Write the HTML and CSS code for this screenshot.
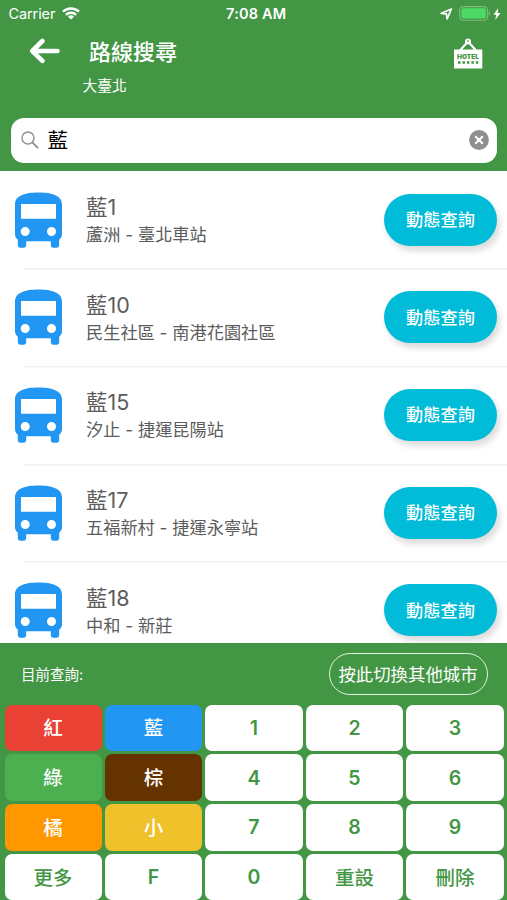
FILE: index.html
```html
<!DOCTYPE html>
<html lang="zh-Hant">
<head>
    <meta charset="UTF-8">
    <meta name="viewport" content="width=device-width, initial-scale=1.0">
    <title>路線搜尋</title>
    <link rel="stylesheet" href="styles.css">
</head>
<body>
    <svg class="defs" width="0" height="0">
        <symbol id="bus" viewBox="0 0 47 56">
            <path fill="#2196f3" fill-rule="evenodd" d="M0 12.500C0 3.500 10 0.500 23.500 0.500S47 3.500 47 12.500V42c0 2.300-1 4.300-2.800 5.800V53c0 1.600-1 2.700-2.500 2.700h-3.400c-1.500 0-2.500-1.100-2.500-2.700v-3.700H11.200V53c0 1.600-1 2.700-2.500 2.700H5.300C3.800 55.700 2.800 54.600 2.800 53v-5.200C1 46.300 0 44.300 0 42zM6 12v14.700h35V12zM10.200 35a4.500 4.500 0 1 0 0 9 4.500 4.500 0 1 0 0-9zM36.500 35a4.500 4.500 0 1 0 0 9 4.500 4.500 0 1 0 0-9z"/>
        </symbol>
    </svg>

    <header class="header">
        <div class="status">
            <div class="status-left">
                <span class="carrier">Carrier</span>
                <svg width="18" height="13" viewBox="0 0 18 13" fill="none" stroke="#fff" stroke-width="2.400">
                    <path d="M1 4.700a11.500 11.500 0 0 1 16 0M3.900 7.800a7.300 7.300 0 0 1 10.200 0"/>
                    <path d="M9 12.600L6 9.700a4.300 4.300 0 0 1 6 0z" fill="#fff" stroke="none"/>
                </svg>
            </div>
            <span class="time">7:08 AM</span>
            <div class="status-right">
                <svg width="13" height="12" viewBox="0 0 13 12" fill="none" stroke="#fff" stroke-width="1.700" stroke-linejoin="round">
                    <path d="M11.400 1L1.200 5.300l5.200 0.600 0.700 5z"/>
                </svg>
                <svg width="32" height="15" viewBox="0 0 32 15">
                    <rect x="0.600" y="0.600" width="28" height="13.600" rx="3.800" fill="none" stroke="#84bd7e" stroke-width="1.100"/>
                    <rect x="2.300" y="2.300" width="24.600" height="10.200" rx="1.800" fill="#4cd964"/>
                    <path d="M29.900 5.200c1.700 0.700 1.700 3.700 0 4.400z" fill="#84bd7e"/>
                </svg>
                <svg width="8" height="12" viewBox="0 0 8 12">
                    <path d="M5.300 0L0.500 6.700h2.800L2.200 12 7.500 5H4.500z" fill="#fff"/>
                </svg>
            </div>
        </div>

        <div class="navbar">
            <svg class="back" width="31" height="26" viewBox="0 0 31 26" fill="none" stroke="#fff" stroke-width="4.600" stroke-linecap="round" stroke-linejoin="round">
                <path d="M13.400 3L3.300 13l10.100 9.800M4 13h24.500"/>
            </svg>
            <h1>路線搜尋</h1>
            <svg class="hotel" width="30" height="31" viewBox="0 0 30 31">
                <path d="M7 12.500l7-8h2l7 8" fill="none" stroke="#fff" stroke-width="2.200"/>
                <circle cx="15" cy="3.500" r="2.100" fill="none" stroke="#fff" stroke-width="1.900"/>
                <rect x="1" y="11.500" width="28.300" height="19" fill="#fff"/>
                <text x="15" y="20.600" class="hotel-text" text-anchor="middle" textLength="22" lengthAdjust="spacingAndGlyphs">HOTEL</text>
                <path d="M5 24.600h21" stroke="#439744" stroke-width="2.500" stroke-dasharray="2.500 1.950"/>
            </svg>
        </div>
        <div class="city">大臺北</div>

        <div class="search">
            <svg width="18" height="18" viewBox="0 0 18 18" fill="none" stroke="#8e8e93" stroke-width="1.400">
                <circle cx="7" cy="7" r="6"/>
                <path d="M11.300 11.300l5.800 5.800" stroke-width="1.900"/>
            </svg>
            <span class="keyword">藍</span>
            <svg width="20" height="20" viewBox="0 0 20 20">
                <circle cx="10" cy="10" r="9.900" fill="#8e8e93"/>
                <path d="M6.200 6.200l7.600 7.600M13.800 6.200l-7.600 7.600" stroke="#fff" stroke-width="2.100"/>
            </svg>
        </div>
    </header>

    <main class="routes">
        <div class="route">
            <svg class="bus"><use href="#bus"/></svg>
            <div class="info">
                <div class="name">藍1</div>
                <div class="stops">蘆洲 - 臺北車站</div>
            </div>
            <button class="query">動態查詢</button>
        </div>
        <div class="route">
            <svg class="bus"><use href="#bus"/></svg>
            <div class="info">
                <div class="name">藍10</div>
                <div class="stops">民生社區 - 南港花園社區</div>
            </div>
            <button class="query">動態查詢</button>
        </div>
        <div class="route">
            <svg class="bus"><use href="#bus"/></svg>
            <div class="info">
                <div class="name">藍15</div>
                <div class="stops">汐止 - 捷運昆陽站</div>
            </div>
            <button class="query">動態查詢</button>
        </div>
        <div class="route">
            <svg class="bus"><use href="#bus"/></svg>
            <div class="info">
                <div class="name">藍17</div>
                <div class="stops">五福新村 - 捷運永寧站</div>
            </div>
            <button class="query">動態查詢</button>
        </div>
        <div class="route">
            <svg class="bus"><use href="#bus"/></svg>
            <div class="info">
                <div class="name">藍18</div>
                <div class="stops">中和 - 新莊</div>
            </div>
            <button class="query">動態查詢</button>
        </div>
    </main>

    <footer class="panel">
        <div class="current">
            <span>目前查詢:</span>
            <button class="switch">按此切換其他城市</button>
        </div>
        <div class="keypad">
            <button class="key word red">紅</button>
            <button class="key word blue">藍</button>
            <button class="key">1</button>
            <button class="key">2</button>
            <button class="key">3</button>
            <button class="key word green">綠</button>
            <button class="key word brown">棕</button>
            <button class="key">4</button>
            <button class="key">5</button>
            <button class="key">6</button>
            <button class="key word orange">橘</button>
            <button class="key word yellow">小</button>
            <button class="key">7</button>
            <button class="key">8</button>
            <button class="key">9</button>
            <button class="key word">更多</button>
            <button class="key">F</button>
            <button class="key">0</button>
            <button class="key word">重設</button>
            <button class="key word">刪除</button>
        </div>
    </footer>
</body>
</html>
```
FILE: styles.css
```css
*{
    box-sizing: border-box;
}

body{
    margin: 0;
    height: 900px;
    display: flex;
    flex-direction: column;
    overflow: hidden;
    font-family: Inter, "Noto Sans CJK TC", sans-serif;
    background-color: #fff;
}

svg{
    display: block;
    flex: none;
}

.defs{
    position: absolute;
}

button{
    border: none;
    padding: 0;
    font-family: inherit;
    white-space: nowrap;
}

.header{
    height: 170.7px;
    flex: none;
    background-color: #439744;
    color: white;
}

.status{
    height: 27px;
    padding: 0 6px 0 8.500px;
    display: grid;
    grid-template-columns: 1fr auto 1fr;
    align-items: center;
    font-size: 14.500px;
}

.status-left,
.status-right{
    display: flex;
    align-items: center;
}

.status-left{
    gap: 7px;
}

.status-right{
    justify-content: flex-end;
    gap: 6.500px;
}

.status-right svg:last-child{
    margin-left: -4.500px;
}

.carrier{
    letter-spacing: -0.100px;
}

.time{
    font-weight: 600;
    letter-spacing: 0.200px;
    margin-left: 3px;
}

.navbar{
    height: 48px;
    padding: 0 24px 0 29px;
    display: flex;
    align-items: center;
}

h1{
    flex: 1;
    margin: 1px 0 0 29px;
    font-size: 22px;
    line-height: 30px;
    font-weight: 500;
}

.hotel{
    margin-top: 4px;
}

.hotel-text{
    font-size: 6.800px;
    font-weight: 900;
    fill: #439744;
}

.city{
    height: 22px;
    padding-left: 82.500px;
    font-size: 14.700px;
    line-height: 23px;
}

.search{
    height: 44.500px;
    margin: 21px 10px 0 10.500px;
    padding: 0 8.500px 0 10px;
    display: flex;
    align-items: center;
    border-radius: 13px;
    background-color: white;
}

.keyword{
    flex: 1;
    margin-left: 9px;
    padding-top: 1px;
    font-size: 20.500px;
    line-height: 30px;
    color: #000;
}

.routes{
    flex: 1;
    min-height: 0;
    overflow: hidden;
}

.route{
    height: 97.700px;
    padding: 0 10px 0 15px;
    display: flex;
    align-items: center;
}

.route + .route{
    background: linear-gradient(#f0f0f0, #f0f0f0) 25px 0 / 100% 1.500px no-repeat;
}

.bus{
    width: 47px;
    height: 56px;
}

.info{
    flex: 1;
    margin-left: 24px;
    padding-top: 2px;
    color: #5c5c5c;
}

.name{
    font-size: 21.500px;
    line-height: 29px;
}

.stops{
    font-size: 17.200px;
    line-height: 26px;
}

.query{
    width: 113px;
    height: 52px;
    padding-bottom: 2px;
    border-radius: 26px;
    background-color: #00bcd8;
    box-shadow: 3px 5px 6px rgba(0, 0, 0, 0.14);
    color: white;
    font-size: 17.200px;
    font-weight: 500;
}

.panel{
    height: 256.700px;
    flex: none;
    background-color: #439744;
}

.current{
    height: 61.300px;
    padding: 0 19.500px 0 21px;
    display: flex;
    align-items: center;
    justify-content: space-between;
    color: white;
    font-size: 14.500px;
}

.switch{
    width: 159px;
    height: 42px;
    border: 1.500px solid #e2f1e0;
    border-radius: 21px;
    background: none;
    color: white;
    font-size: 17.400px;
}

.keypad{
    padding: 0 3.500px 0 4.500px;
    display: grid;
    grid-template-columns: repeat(5, 1fr);
    grid-auto-rows: 46.400px;
    gap: 3.400px;
}

.key{
    border-radius: 7px;
    background-color: white;
    color: #439744;
    font-size: 19.500px;
    font-weight: 600;
}

.word{
    padding-bottom: 2px;
    font-weight: 500;
}

.red, .blue, .green, .brown, .orange, .yellow{
    color: white;
}

.red{
    background-color: #e94235;
}

.blue{
    background-color: #2196f3;
}

.green{
    background-color: #4caf50;
}

.brown{
    background-color: #653300;
}

.orange{
    background-color: #ff9800;
}

.yellow{
    background-color: #efc12a;
}
```
